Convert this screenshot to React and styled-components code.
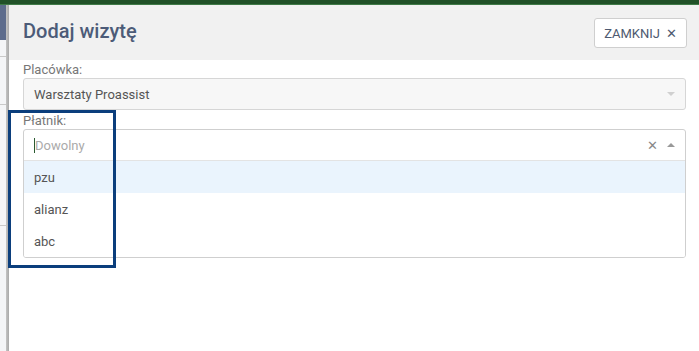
import React from 'react';
import styled, { createGlobalStyle } from 'styled-components';

const GlobalStyle = createGlobalStyle`
  html, body {
    margin: 0;
    padding: 0;
    background: #fff;
    font-family: Roboto, "Liberation Sans", Arial, sans-serif;
  }
`;

const Page = styled.div`
  position: relative;
  width: 699px;
  height: 351px;
  overflow: hidden;
  display: flex;
  flex-direction: column;
`;

const TopBar = styled.div`
  height: 5px;
  background: #215128;
  border-bottom: 1px solid #3f7a47;
  box-sizing: border-box;
  flex-shrink: 0;
`;

const Main = styled.div`
  flex: 1;
  display: flex;
`;

const BackStrip = styled.div`
  width: 6px;
  display: flex;
  flex-direction: column;
  background: #f4f5f7;
`;

const BackHeader = styled.div`
  height: 35px;
  background: #5d6c8c;
`;

const BackLine = styled.div`
  height: 1px;
  background: #c9c9c9;
  margin-top: ${p => p.$top}px;
`;

const Shadow = styled.div`
  width: 3px;
  background: linear-gradient(to right, #c4c4c4, #a9a9a9);
`;

const Modal = styled.div`
  flex: 1;
  display: flex;
  flex-direction: column;
  background: #fff;
`;

const Header = styled.div`
  height: 55px;
  background: #f1f1f1;
  display: flex;
  align-items: center;
  justify-content: space-between;
  padding: 0 12px 0 14px;
  box-sizing: border-box;
`;

const Title = styled.h2`
  margin: 0;
  margin-top: -4px;
  font-size: 20px;
  font-weight: 500;
  color: #4c5b78;
`;

const CloseButton = styled.button`
  height: 30px;
  padding: 0 9px;
  margin-top: 1px;
  background: #fff;
  border: 1px solid #cfcfcf;
  border-radius: 3px;
  font-family: inherit;
  font-size: 13px;
  color: #4e5a70;
  display: flex;
  align-items: center;
  gap: 6px;
`;

const Body = styled.div`
  padding: 2px 13px 0 14px;
  display: flex;
  flex-direction: column;
`;

const Label = styled.div`
  font-size: 13px;
  color: #777;
  line-height: 16px;
`;

const SelectBox = styled.div`
  height: 32px;
  box-sizing: border-box;
  border: 1px solid #d6d6d6;
  border-radius: 3px;
  background: #f7f7f7;
  display: flex;
  align-items: center;
  justify-content: space-between;
  padding: 0 10px;
  font-size: 13px;
  color: #555;
  margin-bottom: 3px;
`;

const Caret = styled.span`
  width: 0;
  height: 0;
  border-left: 4px solid transparent;
  border-right: 4px solid transparent;
  border-${p => (p.$up ? 'bottom' : 'top')}: 4px solid ${p => p.$color};
`;

const Dropdown = styled.div`
  border: 1px solid #cfcfcf;
  border-radius: 3px;
  background: #fff;
  overflow: hidden;
`;

const SearchRow = styled.div`
  height: 30px;
  display: flex;
  align-items: center;
  justify-content: space-between;
  padding: 0 10px;
  border-bottom: 1px solid #e3e3e3;
  font-size: 13px;
`;

const Placeholder = styled.span`
  color: #aaa;
  border-left: 1px solid #2a5a30;
  line-height: 15px;
`;

const Icons = styled.div`
  display: flex;
  align-items: center;
  gap: 9px;
  color: #888;
  font-size: 13px;
`;

const Option = styled.div`
  height: 32px;
  display: flex;
  align-items: center;
  padding: 0 10px;
  font-size: 13px;
  color: #555;
  background: ${p => (p.$active ? '#eaf4fd' : '#fff')};
`;

const Highlight = styled.div`
  position: absolute;
  left: 8px;
  top: 110px;
  width: 108px;
  height: 158px;
  box-sizing: border-box;
  border: 3px solid #0b3e7c;
  pointer-events: none;
`;

const options = ['pzu', 'alianz', 'abc'];

export default function App() {
  return (
    <>
      <GlobalStyle />
      <Page>
        <TopBar />
        <Main>
          <BackStrip>
            <BackHeader />
            <BackLine $top={16} />
            <BackLine $top={47} />
            <BackLine $top={120} />
          </BackStrip>
          <Shadow />
          <Modal>
            <Header>
              <Title>Dodaj wizytę</Title>
              <CloseButton>ZAMKNIJ <span>✕</span></CloseButton>
            </Header>
            <Body>
              <Label>Placówka:</Label>
              <SelectBox>
                Warsztaty Proassist
                <Caret $color="#d0d0d0" />
              </SelectBox>
              <Label>Płatnik:</Label>
              <Dropdown>
                <SearchRow>
                  <Placeholder>Dowolny</Placeholder>
                  <Icons>
                    <span>✕</span>
                    <Caret $up $color="#999" />
                  </Icons>
                </SearchRow>
                {options.map((o, i) => (
                  <Option key={o} $active={i === 0}>{o}</Option>
                ))}
              </Dropdown>
            </Body>
          </Modal>
        </Main>
        <Highlight />
      </Page>
    </>
  );
}
